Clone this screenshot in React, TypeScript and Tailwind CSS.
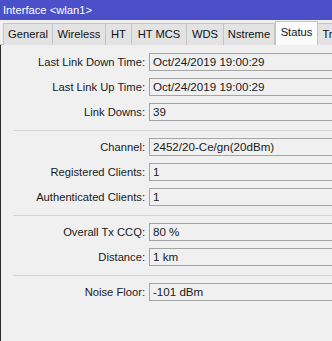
import React from "react";

const tabs = ["General", "Wireless", "HT", "HT MCS", "WDS", "Nstreme", "Status", "Tr"];
const tabWidths = [50, 53, 26, 55, 37, 51, 43, 20];

type Row = { label: string; value: string };
const groups: Row[][] = [
  [
    { label: "Last Link Down Time:", value: "Oct/24/2019 19:00:29" },
    { label: "Last Link Up Time:", value: "Oct/24/2019 19:00:29" },
    { label: "Link Downs:", value: "39" },
  ],
  [
    { label: "Channel:", value: "2452/20-Ce/gn(20dBm)" },
    { label: "Registered Clients:", value: "1" },
    { label: "Authenticated Clients:", value: "1" },
  ],
  [
    { label: "Overall Tx CCQ:", value: "80 %" },
    { label: "Distance:", value: "1 km" },
  ],
  [{ label: "Noise Floor:", value: "-101 dBm" }],
];

function Field({ label, value }: Row) {
  return (
    <div className="flex h-[18px] items-center">
      <div className="w-[146px] shrink-0 pr-[1px] text-right text-[11.2px] leading-[16px]">{label}</div>
      <div className="ml-[3px] flex h-[18px] flex-1 items-center border-y border-l border-[#a5a5a5] bg-[#f0f0f0] pl-[3px] text-[11.6px] leading-[16px] whitespace-nowrap">
        {value}
      </div>
    </div>
  );
}

export default function App() {
  return (
    <div
      className="relative h-[341px] w-[332px] overflow-hidden bg-[#f0f0f0] text-[11.2px] text-[#1a1a1a]"
      style={{ fontFamily: '"Liberation Sans", Arial, sans-serif' }}
    >
      <div className="flex h-[20px] items-center bg-[#4b4fc8] pl-[3px] text-[11.2px] text-white">
        Interface &lt;wlan1&gt;
      </div>
      <div className="relative h-[25px] border-b border-[#c4c4c4]">
        <div className="absolute bottom-[-1px] left-[3px] flex items-end">
          {tabs.map((t, i) => {
            const sel = t === "Status";
            return (
              <div
                key={t}
                style={{ width: tabWidths[i] }}
                className={
                  sel
                    ? "relative z-10 flex h-[24px] shrink-0 items-center justify-center border-x border-t border-[#c4c4c4] bg-[#fbfbfb] pb-[2px] text-[#111]"
                    : "flex h-[22px] shrink-0 items-center justify-center border-t border-r border-[#c4c4c4] bg-[#e3e3e3] text-[#111] first:border-l"
                }
              >
                {t}
              </div>
            );
          })}
        </div>
      </div>
      <div className="absolute top-[45px] bottom-0 left-0 w-[1px] bg-[#2a2a2a]" />
      <div className="flex flex-col pt-[8px]">
        {groups.map((g, gi) => (
          <div key={gi} className="flex flex-col">
            {gi > 0 && (
              <div className="mt-[9px] mb-[7px] ml-[13px] h-[1px] bg-[#d6d6d6]" />
            )}
            <div className="flex flex-col gap-[7px]">
              {g.map((r) => (
                <Field key={r.label} {...r} />
              ))}
            </div>
          </div>
        ))}
      </div>
    </div>
  );
}
